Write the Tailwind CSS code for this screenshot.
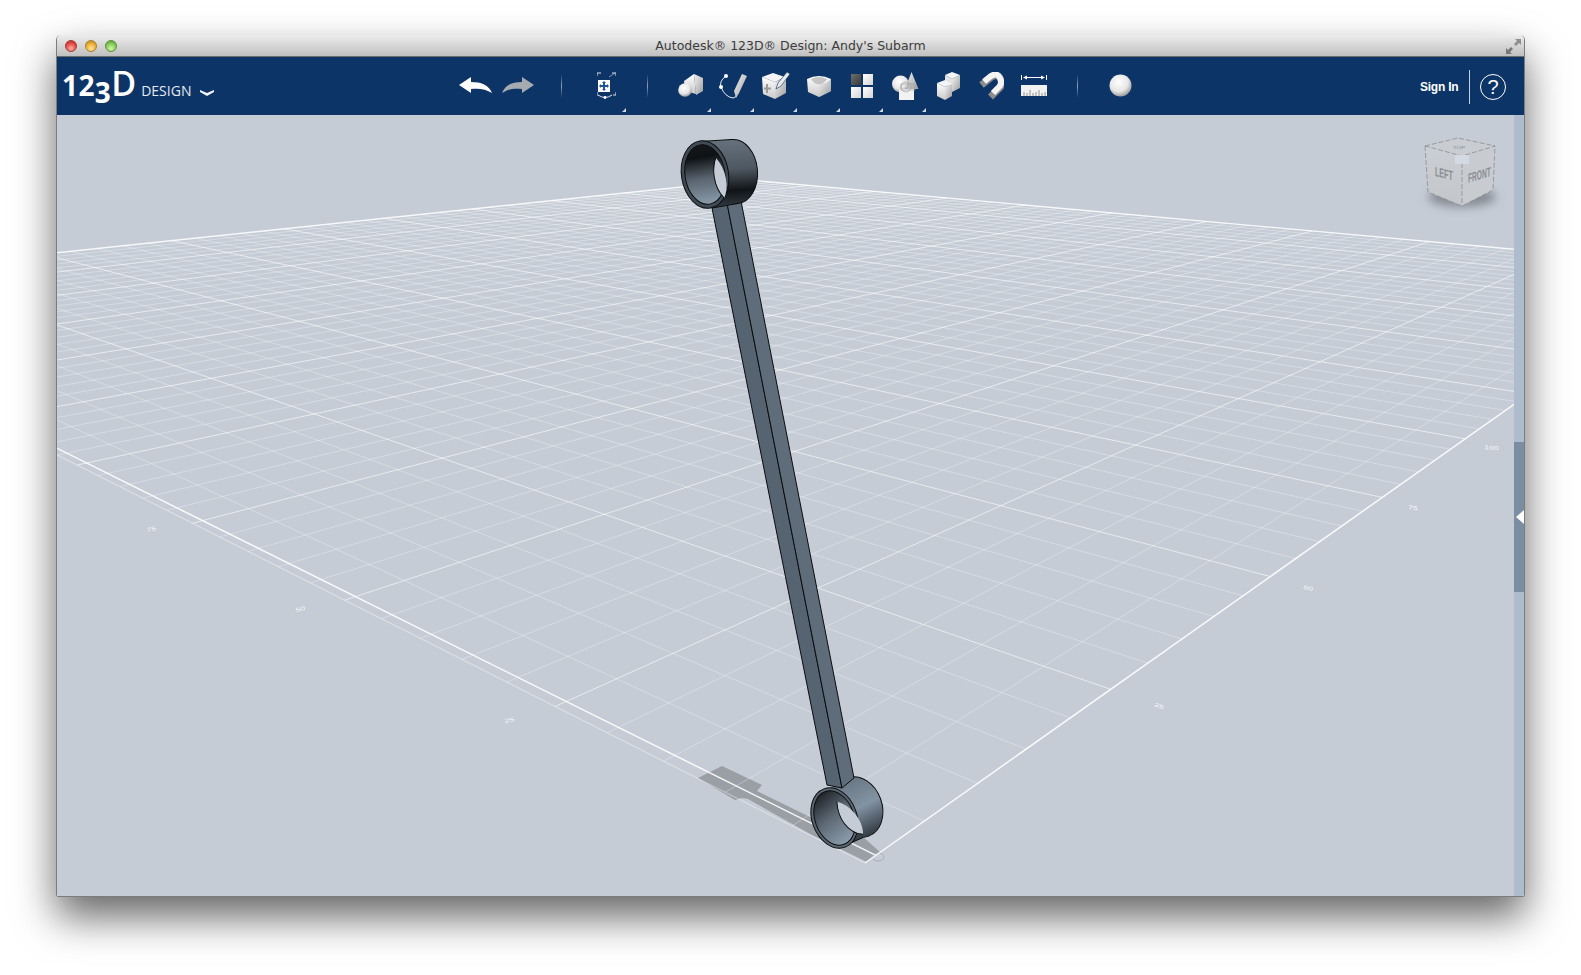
<!DOCTYPE html>
<html lang="en">
<head>
    <meta charset="UTF-8">
    <title>Autodesk 123D Design</title>
    <script src="https://cdn.jsdelivr.net/npm/@tailwindcss/browser@4"></script>
</head>
<body class="bg-white w-[1581px] h-[975px] overflow-hidden pt-[35px] pl-[56px]">

<!-- shared gradients -->
<svg width="0" height="0" class="absolute">
    <defs>
        <linearGradient id="faceL" x1="0" y1="0" x2="0" y2="1"><stop offset="0" stop-color="#ffffff"/><stop offset="1" stop-color="#c9c9c9"/></linearGradient>
        <linearGradient id="faceR" x1="0" y1="0" x2="1" y2="1"><stop offset="0" stop-color="#f4f4f4"/><stop offset="1" stop-color="#9c9c9c"/></linearGradient>
        <radialGradient id="ball" cx="0.42" cy="0.35" r="0.7"><stop offset="0" stop-color="#ffffff"/><stop offset="0.6" stop-color="#e6e6e6"/><stop offset="1" stop-color="#8f8f8f"/></radialGradient>
    </defs>
</svg>

<div class="w-[1469px] h-[862px] flex flex-col rounded-t-[5px] rounded-b-[2px] overflow-hidden border-x border-b border-[#7c7c7c] shadow-[0_20px_40px_rgba(0,0,0,0.6)] relative">

    <!-- title bar -->
    <div class="h-[22px] shrink-0 relative flex items-center justify-center bg-gradient-to-b from-[#ececec] to-[#c0c0c0] border-b border-[#6c6c6c] font-['DejaVu_Sans',sans-serif] text-[12.5px] text-[#3c3c3c]">
        <div class="absolute left-[8px] top-[5px] flex gap-[8px]">
            <div class="w-[12px] h-[12px] rounded-full border border-[#a33a36] bg-[radial-gradient(circle_at_50%_75%,#ffb0a8,#e0453e_60%,#a82c28)]"></div>
            <div class="w-[12px] h-[12px] rounded-full border border-[#a8812c] bg-[radial-gradient(circle_at_50%_75%,#ffe59a,#e8a92f_60%,#ab7a1c)]"></div>
            <div class="w-[12px] h-[12px] rounded-full border border-[#5c9238] bg-[radial-gradient(circle_at_50%_75%,#d2f7a8,#7fc455_60%,#4f8f2e)]"></div>
        </div>
        <span class="relative top-[1px]">Autodesk® 123D® Design: Andy's Subarm</span>
        <svg class="absolute right-[3px] top-[4px]" width="15" height="15" viewBox="0 0 15 15">
            <path d="M15 0 L15 6 L13 4 L10 7 L8 5 L11 2 L9 0 Z" fill="#8f8f8f"/>
            <path d="M0 15 L0 9 L2 11 L5 8 L7 10 L4 13 L6 15 Z" fill="#777777"/>
        </svg>
    </div>

    <!-- toolbar -->
    <div class="h-[58px] shrink-0 bg-[#0d3466] flex items-center pb-[1px] text-white">
        <div class="ml-[5px] w-[160px] h-full flex items-baseline pt-[9px] font-['Open_Sans',sans-serif] leading-none">
            <span class="font-bold text-[28px] tracking-[0.4px] leading-none">12<span class="relative top-[7px]">3</span></span><span class="font-semibold text-[34px] leading-none">D</span>
            <span class="ml-[5px] text-[14px] leading-none text-[#e4e9f0]">DESIGN</span>
            <svg class="ml-[9px] mb-[6px]" width="14" height="6" viewBox="0 0 14 6"><path d="M0 0 L7 3 L14 0 L14 2 L7 6 L0 2 Z" fill="#f4f4f4"/></svg>
        </div>

        <svg class="ml-[237px]" width="33" height="17" viewBox="0 0 33 17"><path d="M0 8 L12 0 L12 5 C22 5 30 8 33 16 C27 12 20 11 12 12 L12 16 Z" fill="#ffffff"/></svg>
        <svg class="ml-[10px]" width="32" height="17" viewBox="0 0 32 17"><path d="M32 8 L20 0 L20 5 C10 5 3 8 0 16 C6 12 12 11 20 12 L20 16 Z" fill="#a6abb2"/></svg>

        <div class="ml-[27px] w-px h-[24px] bg-gradient-to-b from-transparent via-[#8fa0b5] to-transparent"></div>

        <div class="ml-[23px] w-[43px] h-full relative flex items-center justify-center">
            <svg width="19" height="28" viewBox="0 0 19 28">
                <path d="M0 4 V1 H4 M15 1 H19 V4 M0 20 V24 M19 20 V23 H16" stroke="#dfe5ec" stroke-width="1" fill="none"/>
                <path d="M12 5 L18 1" stroke="#9fb0c4" stroke-width="0.8"/>
                <rect x="1" y="8" width="12" height="12" fill="#ffffff"/>
                <path d="M7 9 L9 11 H8 V13 H10 V12 L12 14 L10 16 V15 H8 V17 H9 L7 19 L5 17 H6 V15 H4 V16 L2 14 L4 12 V13 H6 V11 H5 Z" fill="#20558f"/>
                <path d="M1 23 Q8 28 15 23" stroke="#dfe5ec" stroke-width="1" fill="none"/>
                <circle cx="8" cy="25.5" r="1.4" fill="#ffffff"/>
            </svg>
            <div class="absolute right-[2px] bottom-[2px] w-0 h-0 border-l-[4px] border-l-transparent border-b-[4px] border-b-[#cfd6df]"></div>
        </div>

        <div class="ml-[19px] w-px h-[24px] bg-gradient-to-b from-transparent via-[#8fa0b5] to-transparent"></div>

        <div class="ml-[20.5px] flex h-full">
            <!-- primitives -->
            <div class="w-[43px] h-full relative flex items-center justify-center">
                <svg width="25" height="23" viewBox="0 0 25 23">
                    <path d="M6 7 L16 0 L18 20 L7 17 Z" fill="url(#faceL)"/>
                    <path d="M16 0 L25 4 L25 17 L18 21 Z" fill="url(#faceR)"/>
                    <circle cx="7" cy="16" r="6.8" fill="url(#ball)"/>
                </svg>
                <div class="absolute right-[1px] bottom-[2px] w-0 h-0 border-l-[4px] border-l-transparent border-b-[4px] border-b-[#cfd6df]"></div>
            </div>
            <!-- sketch -->
            <div class="w-[43px] h-full relative flex items-center justify-center">
                <svg width="28" height="26" viewBox="0 0 28 26">
                    <path d="M7 3 Q0 8 2 14 Q6 24 14 25 Q17 25 19 20" stroke="#e8edf3" stroke-width="1" fill="none"/>
                    <circle cx="7" cy="3" r="2" fill="#ffffff"/>
                    <circle cx="2" cy="14" r="2" fill="#ffffff"/>
                    <path d="M23 1 L28 3 L20 20 L17 25 L15 18 Z" fill="url(#faceR)"/>
                </svg>
                <div class="absolute right-[1px] bottom-[2px] w-0 h-0 border-l-[4px] border-l-transparent border-b-[4px] border-b-[#cfd6df]"></div>
            </div>
            <!-- construct -->
            <div class="w-[43px] h-full relative flex items-center justify-center">
                <svg width="28" height="28" viewBox="0 0 28 28">
                    <path d="M0 5 L11 1 L23 5 L13 10 Z" fill="#f5f5f5"/>
                    <path d="M0 5 L13 10 L13 27 L1 22 Z" fill="url(#faceL)"/>
                    <path d="M13 10 L24 5 L24 21 L13 27 Z" fill="url(#faceR)"/>
                    <path d="M5 12 V21 M2 16.5 H9" stroke="#9a9a9a" stroke-width="2" fill="none"/>
                    <path d="M25 0 L28 2 L19 14 L14 17 L16 11 Z" fill="#e9e9e9" stroke="#0d3466" stroke-width="0.6"/>
                </svg>
                <div class="absolute right-[1px] bottom-[2px] w-0 h-0 border-l-[4px] border-l-transparent border-b-[4px] border-b-[#cfd6df]"></div>
            </div>
            <!-- modify -->
            <div class="w-[43px] h-full relative flex items-center justify-center">
                <svg width="24" height="24" viewBox="0 0 24 24">
                    <path d="M0 5 Q12 -1 24 5 L24 17 L12 23 L1 18 Z" fill="url(#faceL)"/>
                    <path d="M12 23 L24 17 L24 5 L19 9 L12 11 Z" fill="url(#faceR)"/>
                    <path d="M4 5 Q12 1 20 5 Q17 10 12 10.5 Q7 10 4 5 Z" fill="#c4c4c4"/>
                </svg>
                <div class="absolute right-[1px] bottom-[2px] w-0 h-0 border-l-[4px] border-l-transparent border-b-[4px] border-b-[#cfd6df]"></div>
            </div>
            <!-- pattern -->
            <div class="w-[43px] h-full relative flex items-center justify-center">
                <div class="grid grid-cols-2 gap-[2px] w-[22px]">
                    <div class="h-[11px] bg-gradient-to-br from-[#6f6f6f] to-[#3a3a3a]"></div>
                    <div class="h-[11px] bg-gradient-to-br from-white to-[#d4d4d4]"></div>
                    <div class="h-[11px] bg-gradient-to-br from-white to-[#d4d4d4]"></div>
                    <div class="h-[11px] bg-gradient-to-br from-white to-[#d4d4d4]"></div>
                </div>
                <div class="absolute right-[1px] bottom-[2px] w-0 h-0 border-l-[4px] border-l-transparent border-b-[4px] border-b-[#cfd6df]"></div>
            </div>
            <!-- grouping -->
            <div class="w-[43px] h-full relative flex items-center justify-center">
                <svg width="27" height="28" viewBox="0 0 27 28">
                    <path d="M19.5 0 L26.5 17 L13 17 Z" fill="url(#faceR)"/>
                    <circle cx="8.5" cy="12" r="8.5" fill="url(#ball)"/>
                    <rect x="7" y="17" width="15" height="11" fill="#f2f2f2"/>
                    <path d="M9 12 H23 V18 H9 Z" stroke="#a0a0a0" stroke-width="0.7" fill="none"/>
                    <circle cx="14" cy="15" r="5" stroke="#a0a0a0" stroke-width="0.7" fill="none"/>
                </svg>
                <div class="absolute right-[1px] bottom-[2px] w-0 h-0 border-l-[4px] border-l-transparent border-b-[4px] border-b-[#cfd6df]"></div>
            </div>
            <!-- combine -->
            <div class="w-[43px] h-full flex items-center justify-center">
                <svg width="23" height="28" viewBox="0 0 23 28">
                    <path d="M8 3 L15 0 L23 3 L15 7 Z" fill="#f4f4f4"/>
                    <path d="M8 3 L15 7 L15 15 L8 12 Z" fill="#e3e3e3"/>
                    <path d="M15 7 L23 3 L23 16 L15 20 Z" fill="url(#faceR)"/>
                    <path d="M0 11 L8 8 L15 12 L8 15 Z" fill="#f4f4f4"/>
                    <path d="M0 11 L8 15 L8 28 L0 24 Z" fill="url(#faceL)"/>
                    <path d="M8 15 L15 12 L15 24 L8 28 Z" fill="url(#faceR)"/>
                </svg>
            </div>
            <!-- snap -->
            <div class="w-[43px] h-full flex items-center justify-center">
                <svg width="26" height="28" viewBox="0 0 26 28">
                    <path d="M3 12 L13 4 Q19 0 22 6 Q25 12 20 16 L12 24" stroke="#8c8c8c" stroke-width="7" fill="none" transform="translate(0.5 1)"/>
                    <path d="M6 9.5 L13 4 Q19 0 22 6 Q25 12 20 16 L15 21" stroke="#f4f4f4" stroke-width="6" fill="none"/>
                </svg>
            </div>
            <!-- measure -->
            <div class="w-[43px] h-full flex items-center justify-center">
                <svg width="26" height="21" viewBox="0 0 26 21">
                    <path d="M0.5 0 V5 M25.5 0 V5" stroke="#ffffff" stroke-width="1"/>
                    <path d="M3 2.5 H23" stroke="#ffffff" stroke-width="1"/>
                    <path d="M2 2.5 L6 0.5 V4.5 Z M24 2.5 L20 0.5 V4.5 Z" fill="#ffffff"/>
                    <rect y="10" width="26" height="11" fill="#f2f2f2"/>
                    <path d="M3 21 V17 M6 21 V18 M9 21 V15 M12 21 V18 M15 21 V17 M18 21 V15 M21 21 V18 M24 21 V17" stroke="#7b7b7b" stroke-width="0.8"/>
                </svg>
            </div>
        </div>

        <div class="ml-[21.5px] w-px h-[24px] bg-gradient-to-b from-transparent via-[#8fa0b5] to-transparent"></div>

        <svg class="ml-[31px]" width="23" height="23" viewBox="0 0 23 23"><circle cx="11.5" cy="11.5" r="11" fill="url(#ball)"/></svg>

        <div class="ml-auto flex items-center mr-[18px] mt-[3px]">
            <span class="font-['Liberation_Sans',sans-serif] font-bold text-[12px] tracking-[-0.2px]">Sign In</span>
            <div class="ml-[10px] w-px h-[34px] bg-[#c6d0dc]"></div>
            <div class="ml-[10.5px] w-[26px] h-[26px] rounded-full border border-white flex items-center justify-center font-['Liberation_Sans',sans-serif] text-[20px] leading-none">?</div>
        </div>
    </div>

    <!-- viewport -->
    <div class="flex-1 min-h-0 relative bg-[#c5ccd6]">
        <svg id="scene" class="absolute left-0 top-0" width="1457" height="781" viewBox="57 115 1457 781">
            <defs>
                <linearGradient id="ringTop" gradientUnits="userSpaceOnUse" x1="0" y1="138" x2="0" y2="208">
                    <stop offset="0" stop-color="#67737f"/><stop offset="0.45" stop-color="#4d5761"/><stop offset="0.75" stop-color="#111417"/><stop offset="1" stop-color="#343b43"/>
                </linearGradient>
                <linearGradient id="ringTopIn" gradientUnits="userSpaceOnUse" x1="0" y1="145" x2="0" y2="205">
                    <stop offset="0" stop-color="#15181b"/><stop offset="0.2" stop-color="#0f1215"/><stop offset="0.55" stop-color="#58636e"/><stop offset="1" stop-color="#8c9dad"/>
                </linearGradient>
                <linearGradient id="ringBot" gradientUnits="userSpaceOnUse" x1="850" y1="775" x2="860" y2="850">
                    <stop offset="0" stop-color="#66737f"/><stop offset="0.45" stop-color="#8293a3"/><stop offset="0.8" stop-color="#3a444d"/><stop offset="1" stop-color="#1e2429"/>
                </linearGradient>
                <linearGradient id="ringBotIn" gradientUnits="userSpaceOnUse" x1="825" y1="790" x2="845" y2="848">
                    <stop offset="0" stop-color="#1b1f23"/><stop offset="0.45" stop-color="#5d6975"/><stop offset="1" stop-color="#94a5b5"/>
                </linearGradient>
                <clipPath id="holeTop"><ellipse cx="705" cy="174.5" rx="20" ry="30" transform="rotate(-9 705 174.5)"/></clipPath>
                <clipPath id="holeBot"><ellipse cx="834.5" cy="818" rx="19.5" ry="28" transform="rotate(-20 834.5 818)"/></clipPath>
                <filter id="blur6" x="-50%" y="-50%" width="200%" height="200%"><feGaussianBlur stdDeviation="5"/></filter>
                <linearGradient id="cubeL" x1="0" y1="0" x2="0" y2="1"><stop offset="0" stop-color="#cbced2"/><stop offset="1" stop-color="#c3c6ca"/></linearGradient>
            </defs>

            <!-- ground shadow -->
            <path d="M698 778 L722 766 L762 785 L757 791 L812 818 L836 828 L863 837 L880 852 L867 862 L812 835 L748 799 L742 798 L735 800 Z" fill="#9a9fa6"/>
            <ellipse cx="878" cy="857" rx="6" ry="4" fill="none" stroke="#a9afb6" stroke-width="1"/>

            <g id="grid" fill="none" stroke="#ffffff"></g>

            <!-- axis numbers -->
            <g fill="#ffffff" fill-opacity="0.9" font-family="Liberation Sans, sans-serif" font-size="8">
                <text transform="translate(147 532) rotate(-12) scale(1.1 0.7)">75</text>
                <text transform="translate(296 612) rotate(-12) scale(1.1 0.7)">50</text>
                <text transform="translate(505 723) rotate(-12) scale(1.1 0.7)">25</text>
                <text transform="translate(1154 706) rotate(20) scale(1.1 0.7)">25</text>
                <text transform="translate(1303 589) rotate(12) scale(1.1 0.7)">50</text>
                <text transform="translate(1408 509) rotate(8) scale(1.1 0.7)">75</text>
                <text transform="translate(1484 449) rotate(5) scale(1.1 0.7)">100</text>
            </g>

            <!-- bottom ring -->
            <g stroke="#0b0d0f" stroke-width="1">
                <ellipse cx="858" cy="807" rx="24" ry="31" transform="rotate(-20 858 807)" fill="url(#ringBot)"/>
                <path d="M829.6 788 L853 777 L863 837.5 L839.4 848 Z" fill="url(#ringBot)" stroke="none"/>
                <path d="M839.4 848 L863 837.5" fill="none"/>
                <ellipse cx="834.5" cy="818" rx="22.5" ry="31" transform="rotate(-20 834.5 818)" fill="#59656f"/>
                <ellipse cx="834.5" cy="818" rx="19.5" ry="28" transform="rotate(-20 834.5 818)" fill="url(#ringBotIn)"/>
                <ellipse cx="859" cy="807" rx="21" ry="28" transform="rotate(-20 859 807)" fill="#c5ccd6" clip-path="url(#holeBot)"/>
            </g>

            <!-- arm -->
            <g stroke="#0b0d0f" stroke-width="1" stroke-linejoin="round">
                <path d="M712 208 L727 203 L842 788 L827 785 Z" fill="#566370"/>
                <path d="M727 203 L741 201 L854 778 L842 788 Z" fill="#5f6c7a"/>
            </g>

            <!-- top ring -->
            <g stroke="#0b0d0f" stroke-width="1">
                <ellipse cx="735" cy="171.5" rx="22.5" ry="32" transform="rotate(-5 735 171.5)" fill="url(#ringTop)"/>
                <path d="M699 141.5 L732 139.5 L738 203.5 L712 208 Z" fill="url(#ringTop)" stroke="none"/>
                <path d="M699 141.5 L732 139.5 M712 208 L738 203.5" fill="none"/>
                <ellipse cx="705" cy="174.5" rx="23.5" ry="34" transform="rotate(-9 705 174.5)" fill="#414b55"/>
                <ellipse cx="705" cy="174.5" rx="20" ry="30" transform="rotate(-9 705 174.5)" fill="url(#ringTopIn)"/>
                <ellipse cx="734" cy="174" rx="20" ry="30" transform="rotate(-9 734 174)" fill="#c5ccd6" clip-path="url(#holeTop)"/>
            </g>

            <!-- view cube -->
            <ellipse cx="1462" cy="197" rx="34" ry="10" fill="#6b7178" fill-opacity="0.7" filter="url(#blur6)"/>
            <path d="M1425 146 L1458 138 L1495 146 L1462 156 Z" fill="#c9ccd1"/>
            <path d="M1425 146 L1462 156 L1462 206 L1428 192 Z" fill="url(#cubeL)"/>
            <path d="M1462 156 L1495 146 L1493 190 L1462 206 Z" fill="#c8cbcf"/>
            <path d="M1425 146 L1458 138 L1495 146 L1462 156 Z M1425 146 L1428 192 L1462 206 L1493 190 L1495 146 M1462 156 L1462 206" fill="none" stroke="#8b8e92" stroke-width="0.8" stroke-dasharray="5 2"/>
            <rect x="1455" y="155" width="14" height="9" fill="#d3dae3"/>
            <text transform="translate(1453 149) scale(1 0.6)" font-family="Liberation Sans, sans-serif" font-size="6" fill="#85888c">TOP</text>
            <text transform="translate(1435 176) skewY(14) scale(0.65 1.2)" font-family="Liberation Sans, sans-serif" font-weight="bold" font-size="11" fill="#8a8d91">LEFT</text>
            <text transform="translate(1468 183) skewY(-17) scale(0.6 1.2)" font-family="Liberation Sans, sans-serif" font-weight="bold" font-size="11" fill="#8a8d91">FRONT</text>
        </svg>

        <!-- collapsed side panel -->
        <div class="absolute right-0 top-0 bottom-0 w-[10px] bg-[#aebccd]">
            <div class="absolute left-0 top-[327px] w-full h-[150px] bg-[#7b8da0] flex items-center justify-end">
                <div class="w-0 h-0 border-y-[7px] border-y-transparent border-r-[8px] border-r-white"></div>
            </div>
        </div>
    </div>
</div>

<script>
    // perspective map of the 250 x 250 ground grid, s and t count major cells from the near corner
    const near = [865, 863], vanishLeft = [-756, 44], vanishRight = [2021, 46];
    const cLeft = 0.2363, cRight = 0.27;

    function project(s, t) {
        const a = s * cLeft, b = t * cRight, d = 1 + a + b;
        return [(near[0] + a * vanishLeft[0] + b * vanishRight[0]) / d,
                (near[1] + a * vanishLeft[1] + b * vanishRight[1]) / d];
    }

    const grid = document.getElementById('grid');

    function addLine(p, q, opacity, width) {
        const line = document.createElementNS('http://www.w3.org/2000/svg', 'line');
        line.setAttribute('x1', p[0]);
        line.setAttribute('y1', p[1]);
        line.setAttribute('x2', q[0]);
        line.setAttribute('y2', q[1]);
        line.setAttribute('stroke-opacity', opacity);
        line.setAttribute('stroke-width', width);
        grid.appendChild(line);
    }

    for (let i = 1; i < 50; i++) {
        if (i % 5 === 0) continue;
        addLine(project(i / 5, 0), project(i / 5, 10), 0.38, 0.8);
        addLine(project(0, i / 5), project(10, i / 5), 0.38, 0.8);
    }
    for (let i = 1; i < 10; i++) {
        addLine(project(i, 0), project(i, 10), 0.6, 1);
        addLine(project(0, i), project(10, i), 0.6, 1);
    }
    addLine(project(10, 0), project(10, 10), 0.85, 1.4);
    addLine(project(0, 10), project(10, 10), 0.85, 1.4);
    addLine(project(0, 0), project(0, 10), 0.9, 1.5);
    addLine(project(0, 0), project(10, 0), 0.4, 1.1);
    addLine(project(0, 0.035), project(10, 0.035), 0.9, 1.5);
</script>
</body>
</html>
